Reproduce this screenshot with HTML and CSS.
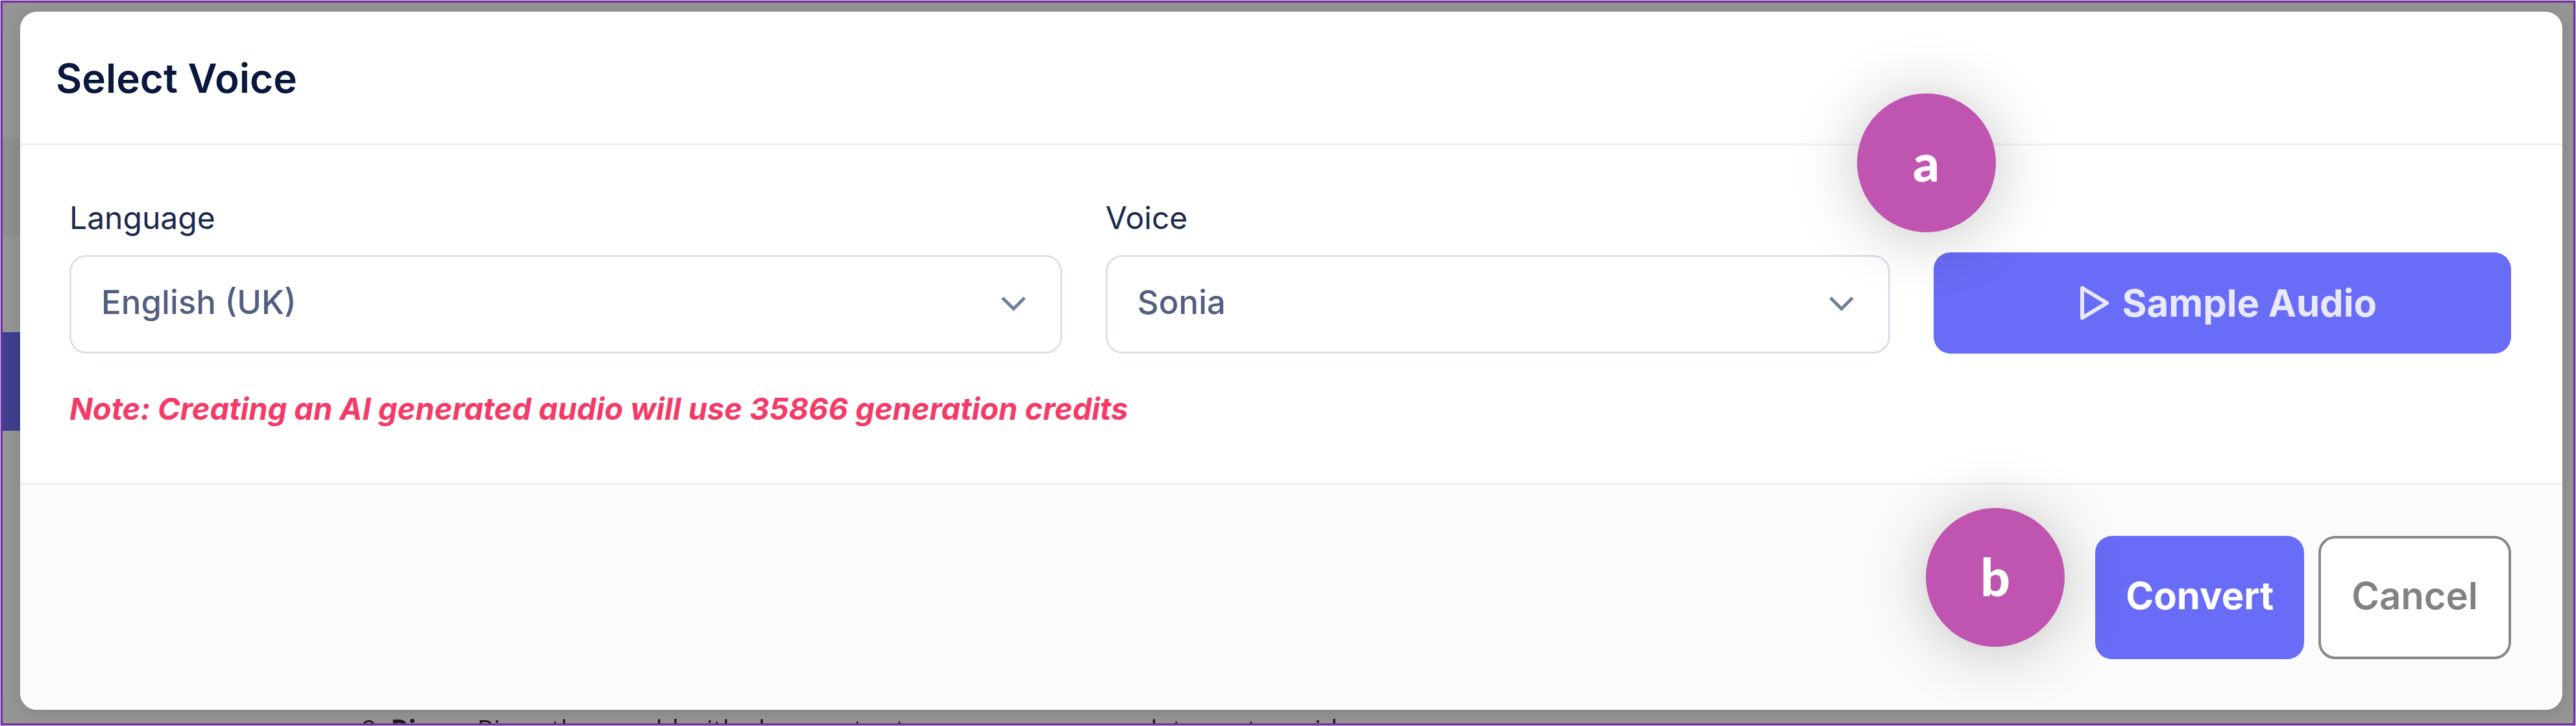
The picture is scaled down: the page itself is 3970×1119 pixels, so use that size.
FILE: index.html
```html
<!DOCTYPE html>
<html lang="en">
<head>
<meta charset="utf-8">
<title>Select Voice</title>
<link rel="stylesheet" href="styles.css">
</head>
<body>
<div class="page">
  <div class="sidebar-band"></div>
  <div class="sidebar-active"></div>
  <form class="modal" role="dialog" aria-labelledby="title">
    <header class="modal-header"><h1 class="title" id="title">Select Voice</h1></header>
    <div class="modal-body">
      <div class="fields">
        <div class="field">
          <label class="label" for="language">Language</label>
          <div class="select-wrap">
            <select class="select" id="language"><option>English (UK)</option></select>
            <svg class="chevron" viewBox="0 0 40 26" aria-hidden="true"><path d="M3 3 20 20 37 3"/></svg>
          </div>
        </div>
        <div class="field">
          <label class="label" for="voice">Voice</label>
          <div class="select-wrap">
            <select class="select" id="voice"><option>Sonia</option></select>
            <svg class="chevron" viewBox="0 0 40 26" aria-hidden="true"><path d="M3 3 20 20 37 3"/></svg>
          </div>
        </div>
        <div class="sample">
          <button class="button button-sample" type="button">
            <svg class="play" viewBox="0 0 46 54" aria-hidden="true"><path d="M4 4V50L42 27Z"/></svg>
            Sample Audio
          </button>
          <span class="badge badge-a">a</span>
        </div>
      </div>
      <p class="note">Note: Creating an AI generated audio will use 35866 generation credits</p>
    </div>
    <footer class="modal-footer">
      <div class="actions">
        <span class="badge badge-b">b</span>
        <button class="button button-convert" type="submit">Convert</button>
        <button class="button button-cancel" type="button">Cancel</button>
      </div>
    </footer>
  </form>
  <p class="article-line">9. <b>Rinse:</b> Rinse the mould with clean water to remove any complete coat, avoid</p>
</div>
</body>
</html>
```
FILE: styles.css
```css
* { box-sizing: border-box; }

body {
  margin: 0;
  font-family: Inter, "Open Sans", sans-serif;
  color: #0a183e;
}

.page {
  position: relative;
  height: 100vh;
  padding: 14px 17px 0 27px;
  overflow: hidden;
  border: 4px solid #7030a0;
  outline: 1px solid #d9c9e6;
  outline-offset: -1px;
  background: #959595;
}

.sidebar-band,
.sidebar-active {
  position: absolute;
  left: 0;
  width: 40px;
  height: 152px;
}
.sidebar-band { top: 209px; background: #8f8f8f; }
.sidebar-active { top: 508px; background: #3f3f90; }

.modal {
  position: relative;
  border-radius: 26px;
  background: #fff;
  box-shadow: 0 4px 24px rgba(0, 0, 0, 0.12);
}

.modal-header {
  padding: 63px 55px 60px;
  border-bottom: 3px solid #f0f0f0;
}

.title {
  margin: 0;
  font-size: 62px;
  font-weight: 600;
  line-height: 80px;
}

.modal-body { padding: 82px 79px 84px 76px; }

.fields {
  display: grid;
  grid-template-columns: 1529fr 1208fr 890fr;
  gap: 67px;
  align-items: end;
}

.label {
  display: block;
  margin-bottom: 27px;
  color: #1b294d;
  font-size: 48px;
  font-weight: 400;
  line-height: 60px;
}

.select-wrap {
  display: grid;
  align-items: center;
}

.select,
.chevron { grid-area: 1 / 1; }

.select {
  width: 100%;
  height: 152px;
  padding: 0 100px 8px 46px;
  appearance: none;
  border: 3px solid #dbe0ec;
  border-radius: 26px;
  background: #fff;
  color: #525f80;
  font: 500 51px Inter, "Open Sans", sans-serif;
}

.chevron {
  justify-self: end;
  width: 40px;
  height: 26px;
  margin-right: 55px;
  pointer-events: none;
}
.chevron path {
  fill: none;
  stroke: #727e9b;
  stroke-width: 5;
}

.sample { position: relative; }

.button {
  border: 0;
  border-radius: 26px;
  background: #696cf6;
  color: #fff;
  font: 700 58px Inter, "Open Sans", sans-serif;
}

.button-sample {
  display: flex;
  align-items: center;
  justify-content: center;
  gap: 20px;
  width: 100%;
  height: 156px;
  padding: 0 0 0 18px;
  color: #e9e9fe;
}

.play {
  width: 46px;
  height: 54px;
}
.play path {
  fill: none;
  stroke: currentColor;
  stroke-width: 6;
  stroke-linejoin: round;
}

.note {
  margin: 55px 0 0;
  color: #f43b68;
  font-size: 47px;
  font-style: italic;
  font-weight: 700;
  line-height: 60px;
}

.modal-footer {
  padding: 79px 79px 75px;
  border-top: 3px solid #f0f0f0;
  border-bottom: 3px solid #fff;
  border-radius: 0 0 26px 26px;
  background: #fbfbfb;
}

.actions {
  position: relative;
  display: flex;
  justify-content: flex-end;
  gap: 22px;
}

.button-convert,
.button-cancel {
  height: 190px;
  padding: 0 47px 6px;
}

.button-cancel {
  border: 4px solid #888;
  background: #fff;
  color: #828282;
  font-weight: 600;
}

.badge {
  position: absolute;
  display: flex;
  align-items: center;
  justify-content: center;
  width: 214px;
  height: 214px;
  padding-bottom: 4px;
  border-radius: 50%;
  background: #c055b1;
  box-shadow: 0 6px 100px rgba(0, 0, 0, 0.24);
  color: #fff;
  font-family: Lato, sans-serif;
  font-size: 80px;
  font-weight: 900;
  pointer-events: none;
}
.badge-a { top: -245px; left: -118px; }
.badge-b { top: -43px; right: 688px; }

.article-line {
  margin: 3px 0 0 526px;
  color: #1c1c1c;
  font-family: "Open Sans", sans-serif;
  font-size: 41px;
  line-height: 52px;
  white-space: nowrap;
}
```
